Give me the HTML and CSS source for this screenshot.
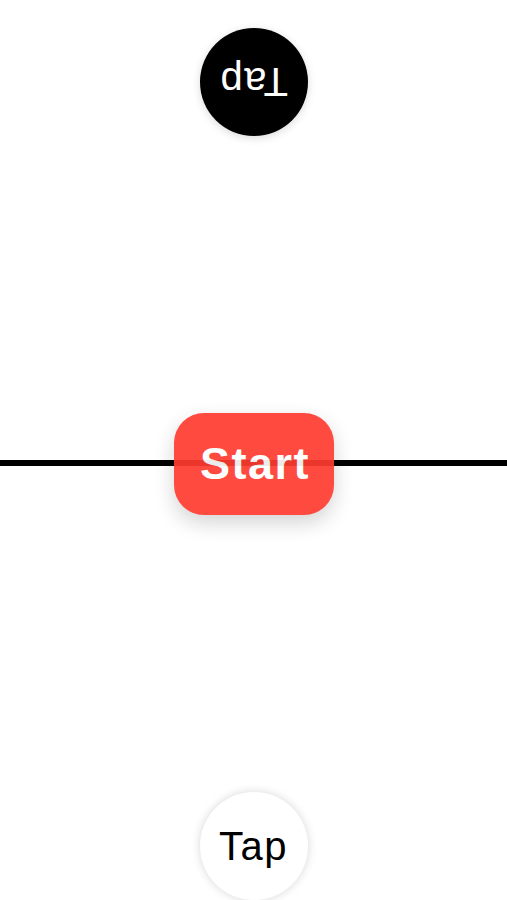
FILE: index.html
```html
<!DOCTYPE html>
<html>
<head>
<meta charset="utf-8">
<link rel="stylesheet" href="styles.css">
</head>
<body>
<main class="screen">
  <div class="tap tap-top"><span class="tap-label flipped">Tap</span></div>
  <div class="stage">
    <button class="start">Start</button>
  </div>
  <div class="tap tap-bottom"><span class="tap-label">Tap</span></div>
</main>
</body>
</html>
```
FILE: styles.css
```css
html, body {
  margin: 0;
  padding: 0;
  background: #fff;
}
.screen {
  height: 900px;
  box-sizing: border-box;
  padding: 28px 0 0;
  display: flex;
  flex-direction: column;
  align-items: center;
  justify-content: space-between;
  font-family: "Liberation Sans", Arial, sans-serif;
}
.tap {
  width: 108px;
  height: 108px;
  border-radius: 50%;
  display: flex;
  align-items: center;
  justify-content: center;
}
.tap-top {
  background: #000;
  color: #fff;
  box-shadow: 0 2px 8px rgba(0,0,0,0.15);
}
.tap-bottom {
  background: #fff;
  color: #000;
  box-shadow: 0 0 10px rgba(0,0,0,0.16);
}
.tap-label {
  font-size: 40px;
  letter-spacing: 1.5px;
  line-height: 1;
}
.flipped {
  transform: rotate(180deg);
}
.stage {
  align-self: stretch;
  height: 102px;
  display: flex;
  align-items: center;
  justify-content: center;
  background: linear-gradient(to bottom, transparent 47px, #000 47px, #000 53px, transparent 53px);
}
.start {
  width: 160px;
  height: 102px;
  border: none;
  border-radius: 30px;
  background: #ff3b30;
  opacity: 0.92;
  color: #fff;
  font-family: "Liberation Sans", Arial, sans-serif;
  font-weight: bold;
  font-size: 45px;
  letter-spacing: 1.5px;
  padding: 0 0 0 2px;
  box-shadow: 0 8px 20px rgba(0,0,0,0.18);
  margin-left: 1px;
}
```
